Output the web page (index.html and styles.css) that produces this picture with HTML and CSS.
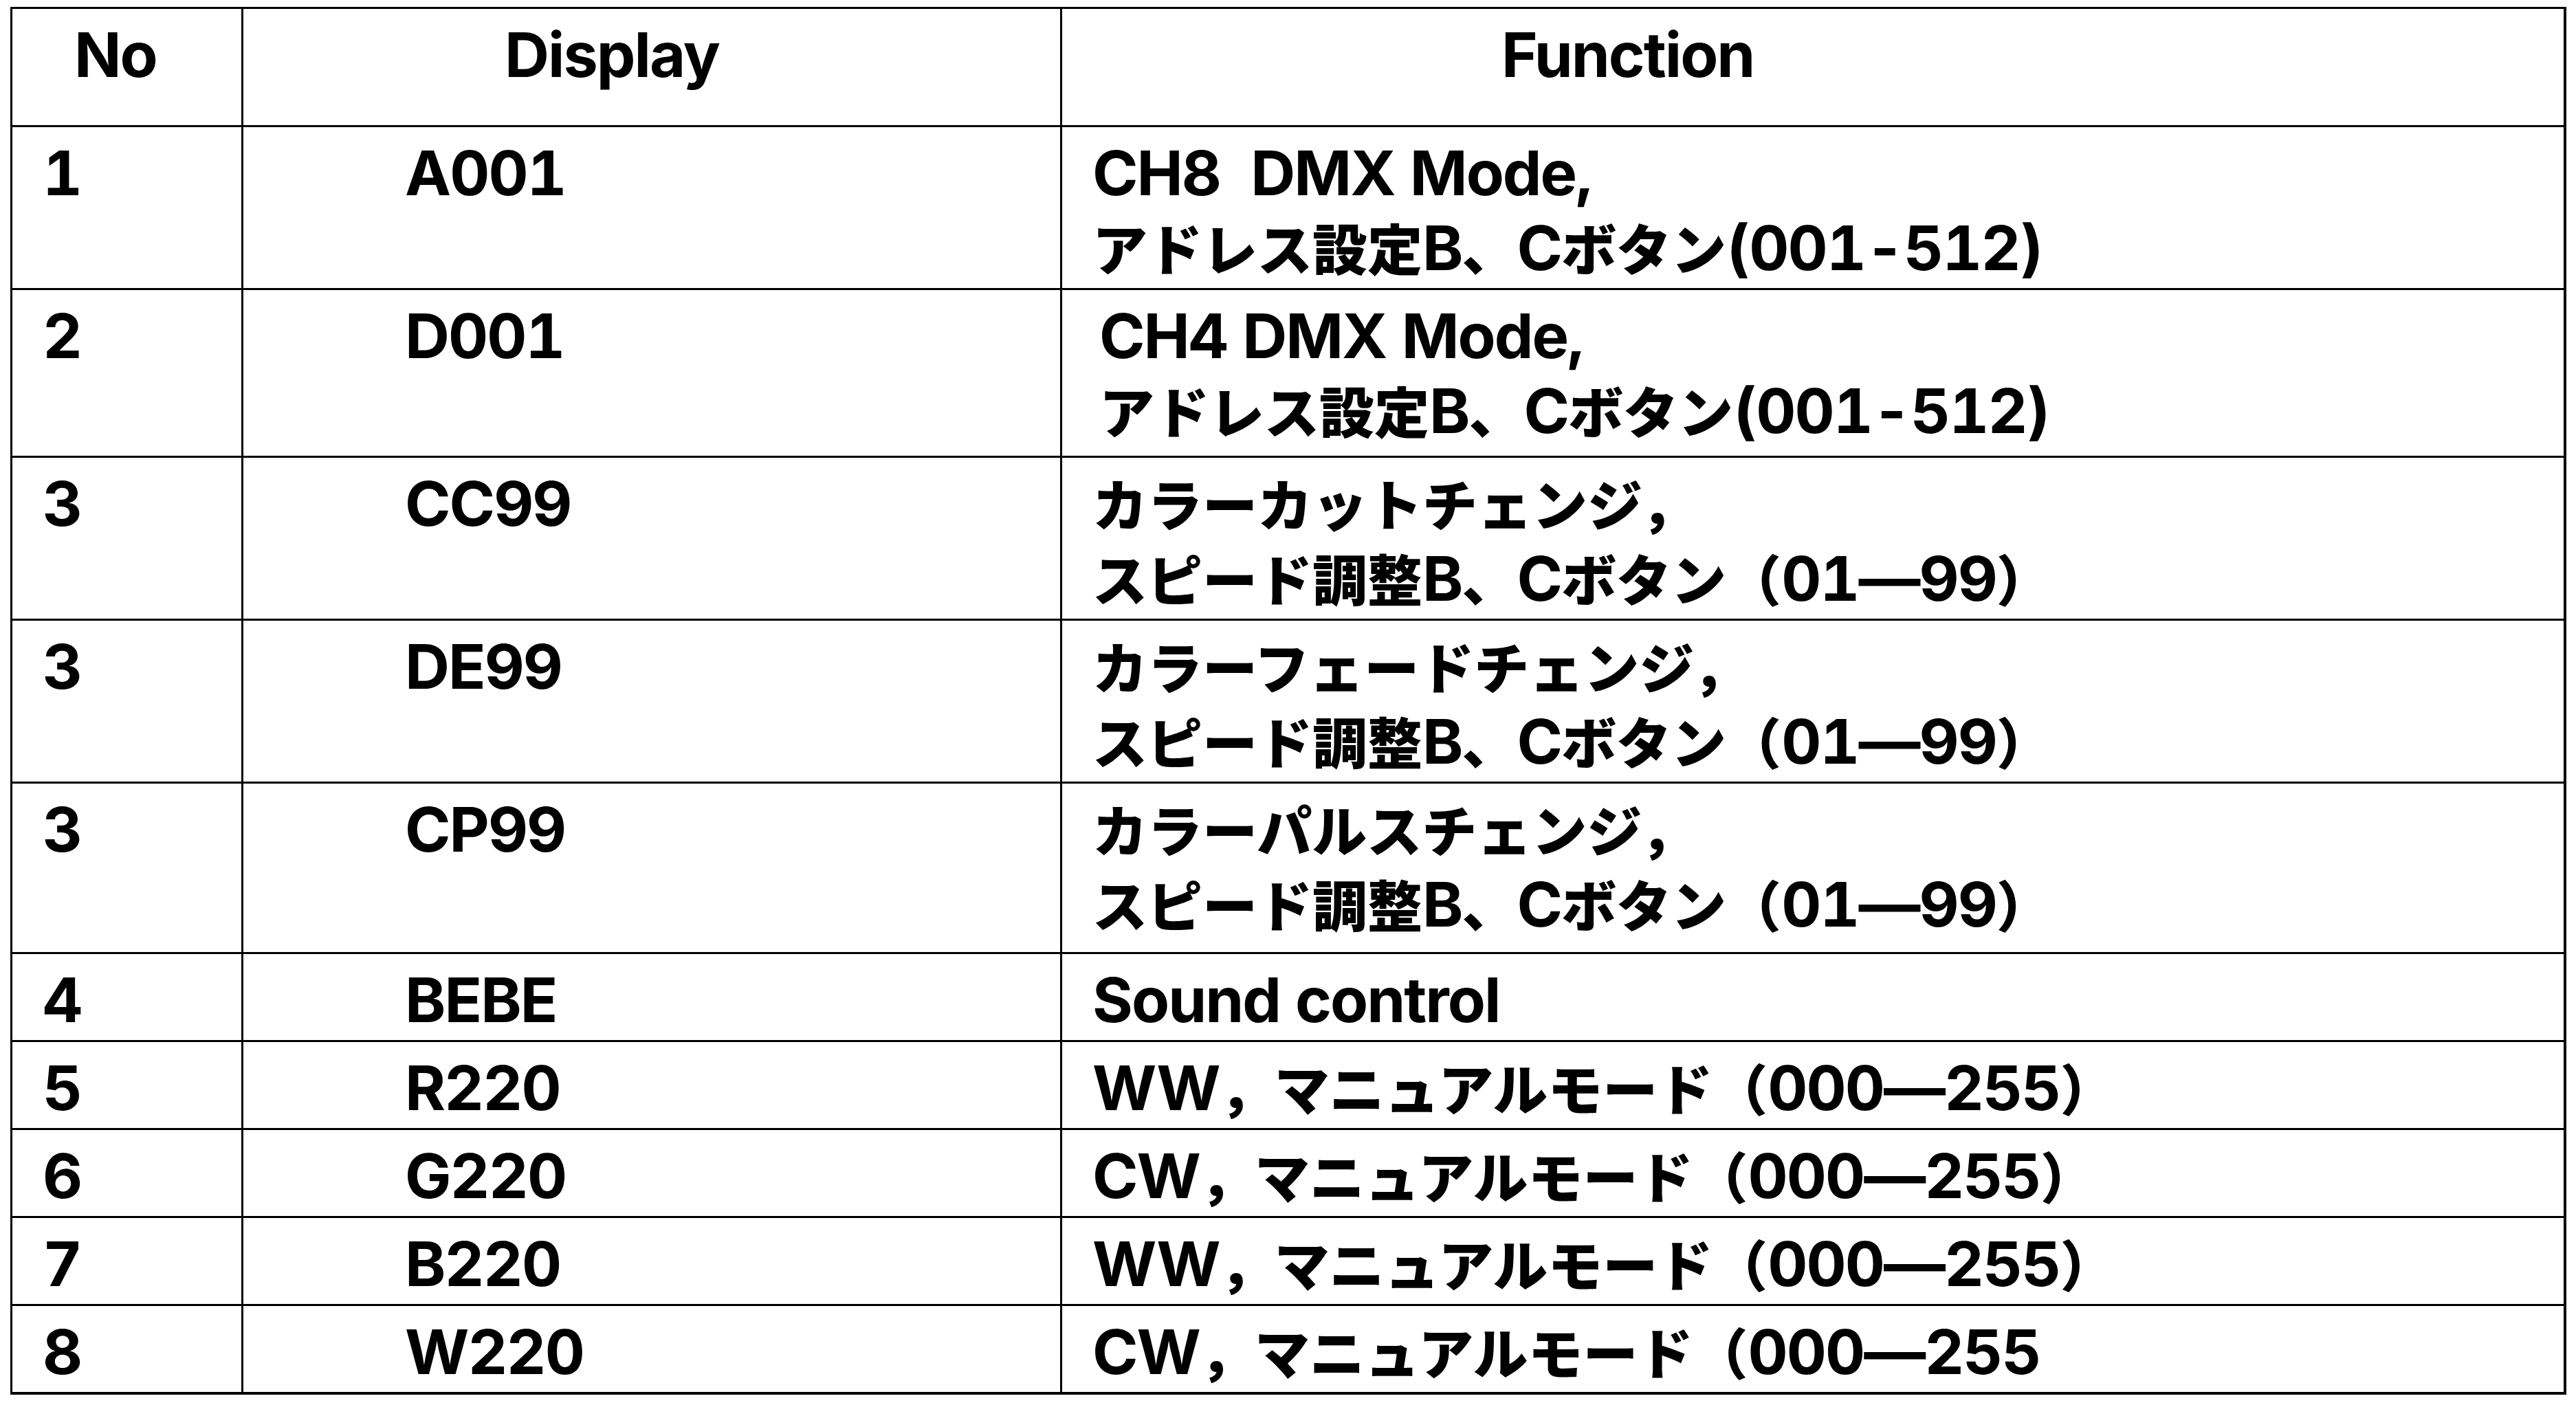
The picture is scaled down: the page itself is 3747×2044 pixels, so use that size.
FILE: index.html
```html
<!DOCTYPE html>
<html lang="ja">
<head>
<meta charset="utf-8">
<title>Display Functions</title>
<link rel="stylesheet" href="styles.css">
</head>
<body>
<div class="page">
<table class="spec">
  <thead>
    <tr>
      <th class="c-no">No</th>
      <th class="c-disp">Display</th>
      <th class="c-func">Function</th>
    </tr>
  </thead>
  <tbody>
    <tr>
      <td class="c-no">1</td>
      <td class="c-disp">A001</td>
      <td class="c-func">CH8&nbsp;&nbsp;DMX Mode,<br><span class="ja">アドレス設定</span>B<span class="ja">、</span>C<span class="ja">ボタン</span>(001-512)</td>
    </tr>
    <tr class="tall">
      <td class="c-no">2</td>
      <td class="c-disp">D001</td>
      <td class="c-func indent">CH4 DMX Mode,<br><span class="ja">アドレス設定</span>B<span class="ja">、</span>C<span class="ja">ボタン</span>(001-512)</td>
    </tr>
    <tr>
      <td class="c-no">3</td>
      <td class="c-disp">CC99</td>
      <td class="c-func"><span class="ja">カラーカットチェンジ，</span><br><span class="ja">スピード調整</span>B<span class="ja">、</span>C<span class="ja">ボタン（</span>01—99<span class="ja">）</span></td>
    </tr>
    <tr>
      <td class="c-no">3</td>
      <td class="c-disp">DE99</td>
      <td class="c-func"><span class="ja">カラーフェードチェンジ，</span><br><span class="ja">スピード調整</span>B<span class="ja">、</span>C<span class="ja">ボタン（</span>01—99<span class="ja">）</span></td>
    </tr>
    <tr class="taller">
      <td class="c-no">3</td>
      <td class="c-disp">CP99</td>
      <td class="c-func"><span class="ja">カラーパルスチェンジ，</span><br><span class="ja">スピード調整</span>B<span class="ja">、</span>C<span class="ja">ボタン（</span>01—99<span class="ja">）</span></td>
    </tr>
    <tr>
      <td class="c-no">4</td>
      <td class="c-disp">BEBE</td>
      <td class="c-func">Sound control</td>
    </tr>
    <tr>
      <td class="c-no">5</td>
      <td class="c-disp">R220</td>
      <td class="c-func">WW<span class="ja">，マニュアルモード（</span>000—255<span class="ja">）</span></td>
    </tr>
    <tr>
      <td class="c-no">6</td>
      <td class="c-disp">G220</td>
      <td class="c-func">CW<span class="ja">，マニュアルモード（</span>000—255<span class="ja">）</span></td>
    </tr>
    <tr>
      <td class="c-no">7</td>
      <td class="c-disp">B220</td>
      <td class="c-func">WW<span class="ja">，マニュアルモード（</span>000—255<span class="ja">）</span></td>
    </tr>
    <tr>
      <td class="c-no">8</td>
      <td class="c-disp">W220</td>
      <td class="c-func">CW<span class="ja">，マニュアルモード（</span>000—255</td>
    </tr>
  </tbody>
</table>
</div>
</body>
</html>
```
FILE: styles.css
```css
html, body {
  margin: 0;
  padding: 0;
  background: #ffffff;
}

.page {
  padding: 10px 0 0 15px;
}

.spec {
  width: 3718px;
  table-layout: fixed;
  border-collapse: separate;
  border-spacing: 0;
  border-top: 3px solid #000;
  border-left: 3px solid #000;
  font-family: "Inter", "Noto Sans CJK JP", sans-serif;
  font-weight: 700;
  font-size: 90px;
  line-height: 109px;
  letter-spacing: -2px;
  color: #000;
  font-variant-numeric: tabular-nums;
}

.spec th,
.spec td {
  box-sizing: border-box;
  border-right: 3px solid #000;
  border-bottom: 3px solid #000;
  text-align: left;
  vertical-align: top;
  padding-top: 12px;
  padding-bottom: 4px;
  font-weight: 700;
  white-space: nowrap;
}

.spec th {
  padding-bottom: 48px;
}

.spec th.c-no { width: 336px; padding-left: 90px; }
.spec th.c-disp { width: 1191px; padding-left: 380px; }
.spec th.c-func { padding-left: 639px; }

.spec td.c-no { padding-left: 44px; }
.spec td.c-disp { padding-left: 235px; }
.spec td.c-func { padding-left: 44px; }
.spec td.c-func.indent { padding-left: 54px; }

.spec th.c-func,
.spec td.c-func {
  border-right-width: 4px;
}

.spec tbody tr:last-child td {
  border-bottom-width: 4px;
}

.spec tr.tall td { padding-bottom: 11px; }
.spec tr.taller td { padding-bottom: 15px; }

.ja {
  font-family: "Noto Sans CJK JP", sans-serif;
  font-size: 80px;
  line-height: 80px;
  letter-spacing: 0;
  font-weight: 900;
}
```
